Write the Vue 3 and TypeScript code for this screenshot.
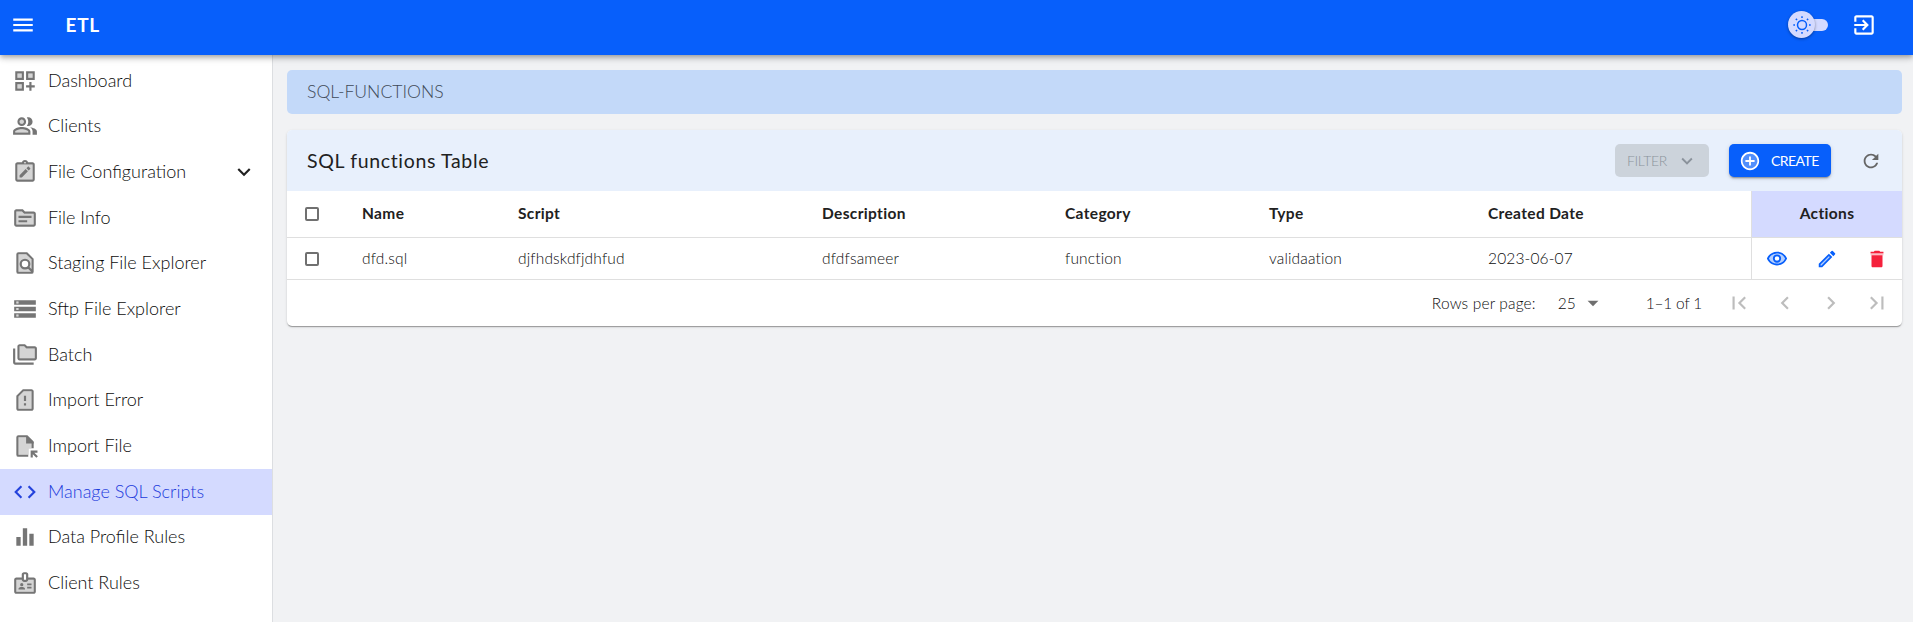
<script setup lang="ts">
import { h } from 'vue'

interface Glyph {
  soft?: string
  solid?: string
  line?: string
}
interface NavItem {
  label: string
  icon: string
  active?: boolean
  expandable?: boolean
}

const glyphs: Record<string, Glyph> = {
  dashboard: {
    soft: 'M5 5h4v4H5zM5 15h4v4H5zM15 5h4v4h-4z',
    solid: 'M3 11h8V3H3v8zm2-6h4v4H5V5zM13 3v8h8V3h-8zm6 6h-4V5h4v4zM3 21h8v-8H3v8zm2-6h4v4H5v-4zM18 13h-2v3h-3v2h3v3h2v-3h3v-2h-3z',
  },
  people: {
    soft: 'M9 6a2 2 0 1 0 0 4 2 2 0 0 0 0-4zM9 15c-2.7 0-5.8 1.29-6 2.01V18h12v-1c-.2-.71-3.3-2-6-2z',
    solid: 'M16.67 13.13C18.04 14.06 19 15.32 19 17v3h4v-3c0-2.18-3.57-3.47-6.33-3.87zM15 12c2.21 0 4-1.79 4-4s-1.79-4-4-4c-.47 0-.91.1-1.33.24C14.5 5.27 15 6.58 15 8s-.5 2.73-1.33 3.76c.42.14.86.24 1.33.24zM9 12c2.21 0 4-1.79 4-4s-1.79-4-4-4-4 1.79-4 4 1.79 4 4 4zm0-6c1.1 0 2 .9 2 2s-.9 2-2 2-2-.9-2-2 .9-2 2-2zM9 13c-2.67 0-8 1.34-8 4v3h16v-3c0-2.66-5.33-4-8-4zm6 5H3v-.99C3.2 16.29 6.3 15 9 15s5.8 1.29 6 2v1z',
  },
  config: {
    soft: 'M5 5h14v14H5z',
    solid: 'M19 3h-4.18C14.4 1.84 13.3 1 12 1s-2.4.84-2.82 2H5c-1.1 0-2 .9-2 2v14c0 1.1.9 2 2 2h14c1.1 0 2-.9 2-2V5c0-1.1-.9-2-2-2zm-7-.25a.75.75 0 1 1 0 1.5.75.75 0 0 1 0-1.5zM19 19H5V5h14v14zM7 14.9V17h2.1l5.6-5.6-2.1-2.1L7 14.9zM13.3 8.6l2.1 2.1 1.4-1.4c.25-.25.25-.6 0-.85l-1.25-1.25c-.25-.25-.6-.25-.85 0z',
  },
  topic: {
    soft: 'M4 6h5.17l2 2H20v10H4z',
    solid: 'M20 6h-8l-2-2H4c-1.1 0-1.99.9-1.99 2L2 18c0 1.1.9 2 2 2h16c1.1 0 2-.9 2-2V8c0-1.1-.9-2-2-2zm0 12H4V6h5.17l2 2H20v10zM18 12H6v-2h12v2zm-4 4H6v-2h8v2z',
  },
  search: {
    soft: 'M6 4h7.2L18 8.8V20H6zM12 10a3 3 0 1 0 0 6 3 3 0 0 0 0-6z',
    line: 'M6 3h7.6L19 8.4V20a1 1 0 0 1-1 1H6a1 1 0 0 1-1-1V4a1 1 0 0 1 1-1zM12 9a4 4 0 1 0 0 8 4 4 0 0 0 0-8zM14.8 15.8l4 4',
  },
  storage: {
    soft: 'M4 5h2v2H4zM4 11h2v2H4zM4 17h2v2H4z',
    solid: 'M2 20h20v-4H2v4zm2-3h2v2H4v-2zM2 4v4h20V4H2zm4 3H4V5h2v2zm-4 7h20v-4H2v4zm2-3h2v2H4v-2z',
  },
  folders: {
    soft: 'M7 4h4.17l2 2H21v9H7z',
    solid: 'M3 19h17v2H3c-1.1 0-2-.9-2-2V6h2v13zM21 4h-7l-2-2H7c-1.1 0-2 .9-2 2v11c0 1.1.9 2 2 2h14c1.1 0 2-.9 2-2V6c0-1.1-.9-2-2-2zm0 11H7V4h4.17l2 2H21v9z',
  },
  alert: {
    soft: 'M18 20H6V8.83L10.83 4H18z',
    solid: 'M18 2h-8L4 8v12c0 1.1.9 2 2 2h12c1.1 0 2-.9 2-2V4c0-1.1-.9-2-2-2zm0 18H6V8.83L10.83 4H18v16zM11 15h2v2h-2zM11 8h2v5h-2z',
  },
  importFile: {
    soft: 'M6 4h7v5h5v5.5h-2.5V20H6z',
    solid: 'M13 3h1.2L20 8.6v1h-7zM17.2 16.2h6.3v2h-2.9l3.3 3.3-1.4 1.4-3.3-3.3v2.9h-2z',
    line: 'M15 21H6a1 1 0 0 1-1-1V4a1 1 0 0 1 1-1h7.8L19 8.3V14',
  },
  code: { solid: 'M9.4 16.6 4.8 12l4.6-4.6L8 6l-6 6 6 6 1.4-1.4zm5.2 0 4.6-4.6-4.6-4.6L16 6l6 6-6 6-1.4-1.4z' },
  bars: { solid: 'M10 20h4V4h-4v16zm-6 0h4v-8H4v8zM16 9v11h4V9h-4z' },
  badge: {
    soft: 'M4 9h5c0 1.1.9 2 2 2h2c1.1 0 2-.9 2-2h5v11H4z',
    solid: 'M20 7h-5V4c0-1.1-.9-2-2-2h-2c-1.1 0-2 .9-2 2v3H4c-1.1 0-2 .9-2 2v11c0 1.1.9 2 2 2h16c1.1 0 2-.9 2-2V9c0-1.1-.9-2-2-2zm-9-3h2v5h-2V4zm9 16H4V9h5c0 1.1.9 2 2 2h2c1.1 0 2-.9 2-2h5v11zM9 12a1.5 1.5 0 1 0 0 3 1.5 1.5 0 0 0 0-3zM11.08 16.18C10.44 15.9 9.74 15.75 9 15.75s-1.44.15-2.08.43c-.56.24-.92.78-.92 1.39V18h6v-.43c0-.61-.36-1.15-.92-1.39zM14 12.5h4V14h-4zM14 15.5h4V17h-4z',
  },
  menu: { solid: 'M3 18h18v-2H3v2zm0-5h18v-2H3v2zm0-7v2h18V6H3z' },
  exit: { solid: 'M10.09 15.59 11.5 17l5-5-5-5-1.41 1.41L12.67 11H3v2h9.67zM19 3H5c-1.11 0-2 .9-2 2v4h2V5h14v14H5v-4H3v4c0 1.1.89 2 2 2h14c1.1 0 2-.9 2-2V5c0-1.1-.9-2-2-2z' },
  down: { solid: 'M7.41 8.59 12 13.17l4.59-4.58L18 10l-6 6-6-6z' },
  caret: { solid: 'M7 10l5 5 5-5z' },
  plus: {
    soft: 'M12 4a8 8 0 1 0 0 16 8 8 0 0 0 0-16z',
    solid: 'M13 7h-2v4H7v2h4v4h2v-4h4v-2h-4V7zM12 2C6.48 2 2 6.48 2 12s4.48 10 10 10 10-4.48 10-10S17.52 2 12 2zm0 18c-4.41 0-8-3.59-8-8s3.59-8 8-8 8 3.59 8 8-3.59 8-8 8z',
  },
  refresh: { solid: 'M17.65 6.35C16.2 4.9 14.21 4 12 4c-4.42 0-7.99 3.58-7.99 8s3.57 8 7.99 8c3.73 0 6.84-2.55 7.73-6h-2.08c-.82 2.33-3.04 4-5.65 4-3.31 0-6-2.69-6-6s2.69-6 6-6c1.66 0 3.14.69 4.22 1.78L13 11h7V4l-2.35 2.35z' },
  eye: {
    soft: 'M12 6a9.77 9.77 0 0 0-8.82 5.5 9.76 9.76 0 0 0 17.64 0A9.77 9.77 0 0 0 12 6zm0 3a2.5 2.5 0 1 1 0 5 2.5 2.5 0 0 1 0-5z',
    solid: 'M12 4C7 4 2.73 7.11 1 11.5 2.73 15.89 7 19 12 19s9.27-3.11 11-7.5C21.27 7.11 17 4 12 4zm0 13a9.77 9.77 0 0 1-8.82-5.5 9.76 9.76 0 0 1 17.64 0A9.77 9.77 0 0 1 12 17zM12 7a4.5 4.5 0 1 0 0 9 4.5 4.5 0 0 0 0-9zm0 7a2.5 2.5 0 1 1 0-5 2.5 2.5 0 0 1 0 5z',
  },
  edit: {
    soft: 'M5 18.08V19h.92l9.06-9.06-.92-.92z',
    solid: 'M20.71 7.04a.996.996 0 0 0 0-1.41l-2.34-2.34a.996.996 0 0 0-1.41 0l-1.83 1.83 3.75 3.75 1.83-1.83zM3 17.25V21h3.75L17.81 9.94l-3.75-3.75L3 17.25zM5.92 19H5v-.92l9.06-9.06.92.92L5.92 19z',
  },
  trash: {
    soft: 'M5 5h14v3H5z',
    solid: 'M6 8h12v11.5c0 .9-.6 1.5-1.5 1.5h-9c-.9 0-1.5-.6-1.5-1.5zM15.5 4l-1-1h-5l-1 1H5v1.600h14V4z',
  },
  first: { solid: 'M18.41 16.59 13.82 12l4.59-4.59L17 6l-6 6 6 6zM6 6h2v12H6z' },
  prev: { solid: 'M15.41 7.41 14 6l-6 6 6 6 1.41-1.41L10.83 12z' },
  next: { solid: 'M8.59 16.59 13.17 12 8.59 7.41 10 6l6 6-6 6z' },
  last: { solid: 'M5.59 7.41 10.18 12l-4.59 4.59L7 18l6-6-6-6zM16 6h2v12h-2z' },
}

const nav: NavItem[] = [
  { label: 'Dashboard', icon: 'dashboard' },
  { label: 'Clients', icon: 'people' },
  { label: 'File Configuration', icon: 'config', expandable: true },
  { label: 'File Info', icon: 'topic' },
  { label: 'Staging File Explorer', icon: 'search' },
  { label: 'Sftp File Explorer', icon: 'storage' },
  { label: 'Batch', icon: 'folders' },
  { label: 'Import Error', icon: 'alert' },
  { label: 'Import File', icon: 'importFile' },
  { label: 'Manage SQL Scripts', icon: 'code', active: true },
  { label: 'Data Profile Rules', icon: 'bars' },
  { label: 'Client Rules', icon: 'badge' },
]

const columns = ['Name', 'Script', 'Description', 'Category', 'Type', 'Created Date']
const record = ['dfd.sql', 'djfhdskdfjdhfud', 'dfdfsameer', 'function', 'validaation', '2023-06-07']
const pager = ['first', 'prev', 'next', 'last']
const actions = ['eye', 'edit', 'trash']
const rays = [0, 45, 90, 135, 180, 225, 270, 315]

const Icon = (props: { name: string }) => {
  const g = glyphs[props.name]
  return h('svg', { viewBox: '0 0 24 24', class: 'icon', fill: 'currentColor' }, [
    g.soft ? h('path', { d: g.soft, opacity: 0.3, 'fill-rule': 'evenodd' }) : null,
    g.solid ? h('path', { d: g.solid, 'fill-rule': 'evenodd' }) : null,
    g.line ? h('path', { d: g.line, fill: 'none', stroke: 'currentColor', 'stroke-width': 2 }) : null,
  ])
}
Icon.props = ['name']
</script>

<template>
  <div class="app">
    <header class="topbar">
      <Icon name="menu" class="menu" />
      <span class="brand">ETL</span>
      <div class="theme">
        <div class="thumb">
          <svg viewBox="0 0 18 18" class="sun">
            <circle cx="9" cy="9" r="4.5" />
            <path v-for="r in rays" :key="r" d="M9 .3v1.7" :transform="`rotate(${r} 9 9)`" />
          </svg>
        </div>
      </div>
      <Icon name="exit" class="exit" />
    </header>

    <div class="body">
      <nav class="sidebar">
        <a v-for="item in nav" :key="item.label" class="item" :class="{ active: item.active }">
          <Icon :name="item.icon" />
          <span class="label">{{ item.label }}</span>
          <Icon v-if="item.expandable" name="down" class="expand" />
        </a>
      </nav>

      <main class="content">
        <div class="crumb">SQL-FUNCTIONS</div>
        <section class="card">
          <div class="card-head">
            <h1>SQL functions Table</h1>
            <button class="btn filter" disabled><span>FILTER</span><Icon name="down" /></button>
            <button class="btn create"><Icon name="plus" /><span>CREATE</span></button>
            <Icon name="refresh" class="refresh" />
          </div>
          <div class="row head">
            <div class="cell check"><i class="box" /></div>
            <div v-for="c in columns" :key="c" class="cell text">{{ c }}</div>
            <div class="cell actions text">Actions</div>
          </div>
          <div class="row">
            <div class="cell check"><i class="box" /></div>
            <div v-for="c in record" :key="c" class="cell text">{{ c }}</div>
            <div class="cell actions">
              <Icon v-for="a in actions" :key="a" :name="a" :class="a" />
            </div>
          </div>
          <div class="foot">
            <span class="per">Rows per page:</span>
            <span class="size">25</span>
            <Icon name="caret" class="caret" />
            <span class="range">1–1 of 1</span>
            <span v-for="p in pager" :key="p" class="page"><Icon :name="p" /></span>
          </div>
        </section>
      </main>
    </div>
  </div>
</template>

<style>
body { margin: 0; }
</style>

<style scoped>
.app {
  display: flex;
  flex-direction: column;
  height: 100vh;
  overflow: hidden;
  background: #f1f2f4;
  color: #0c0c0c;
  font-family: Lato, "Open Sans", sans-serif;
  font-weight: 300;
}
.icon { display: block; width: 26px; height: 26px; flex: none; }
.topbar {
  display: flex;
  align-items: center;
  box-sizing: border-box;
  height: 55px;
  flex: none;
  padding: 0 36px 5px 9.5px;
  background: #075ffb;
  color: #fff;
  box-shadow: 0 2px 4px -1px rgba(0, 0, 0, .2), 0 4px 5px rgba(0, 0, 0, .14), 0 1px 10px rgba(0, 0, 0, .12);
  z-index: 1;
}
.brand { margin-left: 30px; padding-bottom: 2px; font-size: 19px; font-weight: 700; letter-spacing: .7px; }
.theme {
  box-sizing: border-box;
  width: 33px;
  height: 12px;
  margin: 0 23px 0 auto;
  border-radius: 6px;
  background: #d4daff;
  display: flex;
  align-items: center;
}
.thumb {
  display: grid;
  place-items: center;
  flex: none;
  width: 27px;
  height: 27px;
  margin: 0 0 1px -7px;
  border-radius: 50%;
  background: #d4daff;
  box-shadow: 0 1px 3px rgba(0, 0, 0, .4);
}
.sun { width: 18px; height: 18px; fill: none; stroke: #075ffb; stroke-width: 1.5; }
.body { display: flex; flex: 1; min-height: 0; }
.sidebar {
  box-sizing: border-box;
  width: 273px;
  flex: none;
  padding-top: 3px;
  background: #fff;
  border-right: 1px solid #dcdee1;
}
.item {
  display: flex;
  align-items: center;
  box-sizing: border-box;
  height: 45.67px;
  padding: 0 15px 0 12px;
  color: #757575;
}
.label { margin-left: 10px; padding-bottom: 2px; font-size: 18px; line-height: 26px; color: #0c0c0c; white-space: nowrap; }
.expand { margin-left: auto; color: #212121; }
.active { background: #d4daff; color: #2442dc; }
.active .label { color: #1c3bdc; }
.content { flex: 1; min-width: 0; padding: 15px 11px 0 14px; }
.crumb {
  height: 44px;
  line-height: 44px;
  padding-left: 20px;
  border-radius: 5px;
  background: #c3d9f9;
  color: #3f4a58;
  font-size: 17.6px;
}
.card {
  margin-top: 16px;
  border-radius: 5px;
  background: #fff;
  box-shadow: 0 2px 1px -1px rgba(0, 0, 0, .2), 0 1px 1px rgba(0, 0, 0, .14), 0 1px 3px rgba(0, 0, 0, .12);
  overflow: hidden;
}
.card-head {
  display: flex;
  align-items: center;
  box-sizing: border-box;
  height: 61px;
  padding: 0 20px;
  background: #e8f0fc;
}
h1 { margin: 0 auto 0 0; font-size: 19.5px; font-weight: 400; letter-spacing: .65px; color: #212121; }
.btn {
  display: flex;
  align-items: center;
  box-sizing: border-box;
  height: 33px;
  border: 0;
  border-radius: 5px;
  font: inherit;
  font-size: 14px;
  letter-spacing: -.35px;
}
.btn span { padding-bottom: 1px; }
.filter { width: 94px; padding: 0 11px 0 12px; justify-content: space-between; background: #ccd3db; color: #8b939c; }
.filter .icon { width: 22px; height: 22px; }
.create {
  width: 102px;
  margin: 0 29px 0 20px;
  padding: 0 0 0 10px;
  gap: 10px;
  background: #075ffb;
  color: #fff;
  font-weight: 400;
  letter-spacing: -.55px;
  box-shadow: 0 3px 1px -2px rgba(0, 0, 0, .2), 0 2px 2px rgba(0, 0, 0, .14), 0 1px 5px rgba(0, 0, 0, .12);
}
.create .icon { width: 22px; height: 22px; }
.refresh { width: 22px; height: 22px; color: #666; }
.row {
  display: grid;
  grid-template-columns: 75px 156px 304px 243px 204px 219px 263px 151px;
  height: 42px;
  font-size: 15.5px;
  letter-spacing: .15px;
}
.head { height: 47px; font-weight: 700; letter-spacing: .35px; color: #212121; }
.cell { display: flex; align-items: center; border-bottom: 1px solid #dfdfdf; }
.text { padding-bottom: 2px; }
.check { padding-left: 18px; }
.box { box-sizing: border-box; width: 14px; height: 14px; border: 2px solid #707070; border-radius: 2px; }
.actions { justify-content: center; border-left: 1px solid #dfdfdf; }
.head .actions { background: #d4daff; }
.actions .icon { width: 22px; height: 22px; margin: 0 14px; color: #075ffb; }
.actions .trash { color: #f5213c; }
.foot {
  display: flex;
  align-items: center;
  height: 46px;
  padding-right: 2px;
  justify-content: flex-end;
  font-size: 15.5px;
}
.per { letter-spacing: .15px; }
.size { margin-left: 22px; padding-bottom: 1px; }
.caret { margin-left: 4px; color: #6f6f6f; }
.range { margin: 0 14px 0 40px; letter-spacing: -.2px; }
.page { padding: 0 10px; color: #bdbdbd; }
</style>
